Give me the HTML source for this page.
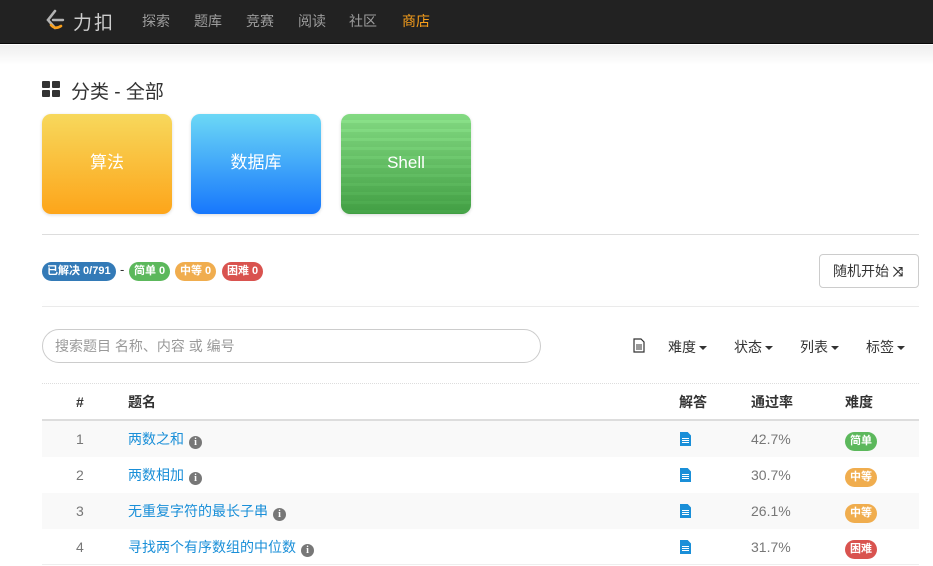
<!DOCTYPE html>
<html><head><meta charset="utf-8"><style>
*{margin:0;padding:0;box-sizing:border-box}
body{width:933px;height:566px;overflow:hidden;background:#fff;font-family:"Liberation Sans","Noto Sans CJK SC",sans-serif;font-size:14px;color:#333;position:relative}
.nav{position:absolute;left:0;top:0;width:933px;height:44px;background:#222;border-bottom:1px solid #080808}
.nav a{position:absolute;top:11px;color:#9d9d9d;font-size:14px}
.shadow{position:absolute;top:45px;left:0;width:933px;height:20px;background:linear-gradient(#eee,#fff)}
.abs{position:absolute}
.card{position:absolute;top:114px;width:130px;height:100px;border-radius:9px;color:#fff;font-size:17px;text-align:center;line-height:98px;overflow:hidden;box-shadow:0 1px 3px rgba(0,0,0,.15)}
.badge{position:absolute;top:262px;height:19px;border-radius:10px;color:#fff;font-size:11px;font-weight:bold;line-height:19px;padding:0 5px}
.row{position:absolute;left:42px;width:877px;height:36px;line-height:36px}
.row span{position:absolute}
.lbl{display:inline-block;height:19px;line-height:19px;border-radius:10px;color:#fff;font-size:11px;font-weight:bold;padding:0 5px;font-style:normal}
.info{display:inline-block;width:13px;height:13px;border-radius:7px;background:#777;color:#fff;font-size:10px;font-weight:bold;line-height:13px;text-align:center;vertical-align:-1px;margin-left:5px;font-family:"Liberation Serif",serif;font-style:normal}
.doc{display:inline-block;width:11px;height:14px;background:#1a8fd8;position:relative;vertical-align:-2px;clip-path:polygon(0 0,70% 0,100% 25%,100% 100%,0 100%)}
.doc:after{content:"";position:absolute;left:2px;top:6px;width:7px;height:1px;background:#fff;box-shadow:0 2px #fff,0 4px #fff}
.caret{display:inline-block;width:0;height:0;border-left:4px solid transparent;border-right:4px solid transparent;border-top:4px solid #333;vertical-align:2px;margin-left:3px}
</style></head><body>
<div class="nav">
 <svg class="abs" style="left:44px;top:9px" width="22" height="22" viewBox="0 0 22 22"><path d="M11 2 L4 11 L11 19" stroke="#b3b3b3" stroke-width="2.6" fill="none" stroke-linecap="round"/><path d="M9 11 H19" stroke="#b3b3b3" stroke-width="2.4" stroke-linecap="round"/><path d="M7 16 Q11 21 17 17" stroke="#f89f1b" stroke-width="2.6" fill="none" stroke-linecap="round"/></svg>
 <span class="abs" style="left:73px;top:8px;color:#ccc;font-size:19px;letter-spacing:2px">力扣</span>
 <a style="left:142px">探索</a><a style="left:194px">题库</a><a style="left:246px">竞赛</a><a style="left:298px">阅读</a><a style="left:349px">社区</a><a style="left:402px;color:#f89f1b">商店</a>
</div>
<div class="shadow"></div>
<div class="abs" style="left:42px;top:81px;width:18px;height:16px">
 <div class="abs" style="left:0;top:0;width:8px;height:7px;background:#333;border-radius:1px"></div><div class="abs" style="left:10px;top:0;width:8px;height:7px;background:#333;border-radius:1px"></div><div class="abs" style="left:0;top:9px;width:8px;height:7px;background:#333;border-radius:1px"></div><div class="abs" style="left:10px;top:9px;width:8px;height:7px;background:#333;border-radius:1px"></div>
</div>
<div class="abs" style="left:71px;top:77px;font-size:19px;color:#333">分类 - 全部</div>
<div class="card" style="left:42px;background:linear-gradient(#f7d85c,#fda51a)">算法</div>
<div class="card" style="left:191px;background:linear-gradient(#6cd8f6,#1777fc)">数据库</div>
<div class="card" style="left:341px;background:repeating-linear-gradient(rgba(0,80,0,.07) 0 6px,rgba(0,0,0,0) 6px 9px),linear-gradient(#8de48c,#46a448)">Shell</div>
<div class="abs" style="left:42px;top:234px;width:877px;height:1px;background:#ddd"></div>
<div class="badge" style="left:42px;background:#337ab7">已解决 0/791</div>
<span class="abs" style="left:120px;top:262px;font-size:13px">-</span>
<div class="badge" style="left:129px;background:#5cb85c">简单 0</div>
<div class="badge" style="left:175px;background:#f0ad4e">中等 0</div>
<div class="badge" style="left:222px;background:#d9534f">困难 0</div>
<div class="abs" style="left:819px;top:254px;width:100px;height:34px;border:1px solid #ccc;border-radius:4px;line-height:32px;padding-left:13px;font-size:14px">随机开始 <b style="font-size:13px">⤨</b></div>
<div class="abs" style="left:42px;top:306px;width:877px;height:1px;background:#eaeaea;box-shadow:0 -3px 6px #f3f3f3"></div>
<div class="abs" style="left:42px;top:329px;width:499px;height:34px;border:1px solid #ccc;border-radius:17px;padding-left:12px;line-height:32px;color:#999;font-size:14px">搜索题目 名称、内容 或 编号</div>
<svg class="abs" style="left:633px;top:338px" width="12" height="15" viewBox="0 0 12 15"><path d="M1 1H8L11 4V14H1Z" fill="none" stroke="#333" stroke-width="1.2"/><path d="M3 7H9M3 9H9M3 11H9" stroke="#333"/></svg>
<span class="abs" style="left:668px;top:337px">难度<i class="caret"></i></span>
<span class="abs" style="left:734px;top:337px">状态<i class="caret"></i></span>
<span class="abs" style="left:800px;top:337px">列表<i class="caret"></i></span>
<span class="abs" style="left:866px;top:337px">标签<i class="caret"></i></span>
<div class="abs" style="left:42px;top:383px;width:877px;border-top:1px dotted #ddd"></div>
<div class="row" style="top:384px;font-weight:bold;border-bottom:2px solid #ddd;height:37px"><span style="left:34px">#</span><span style="left:86px">题名</span><span style="left:637px">解答</span><span style="left:709px">通过率</span><span style="left:803px">难度</span></div>
<div class="row" style="top:421px;background:#f9f9f9"><span style="left:34px;color:#777">1</span><span style="left:86px;color:#1a8fd8">两数之和<b class="info">i</b></span><span style="left:638px"><b class="doc"></b></span><span style="left:709px;color:#777">42.7%</span><span style="left:803px"><b class="lbl" style="background:#5cb85c">简单</b></span></div>
<div class="row" style="top:457px"><span style="left:34px;color:#777">2</span><span style="left:86px;color:#1a8fd8">两数相加<b class="info">i</b></span><span style="left:638px"><b class="doc"></b></span><span style="left:709px;color:#777">30.7%</span><span style="left:803px"><b class="lbl" style="background:#f0ad4e">中等</b></span></div>
<div class="row" style="top:493px;background:#f9f9f9"><span style="left:34px;color:#777">3</span><span style="left:86px;color:#1a8fd8">无重复字符的最长子串<b class="info">i</b></span><span style="left:638px"><b class="doc"></b></span><span style="left:709px;color:#777">26.1%</span><span style="left:803px"><b class="lbl" style="background:#f0ad4e">中等</b></span></div>
<div class="row" style="top:529px;border-bottom:1px solid #eee"><span style="left:34px;color:#777">4</span><span style="left:86px;color:#1a8fd8">寻找两个有序数组的中位数<b class="info">i</b></span><span style="left:638px"><b class="doc"></b></span><span style="left:709px;color:#777">31.7%</span><span style="left:803px"><b class="lbl" style="background:#d9534f">困难</b></span></div>
</body></html>
